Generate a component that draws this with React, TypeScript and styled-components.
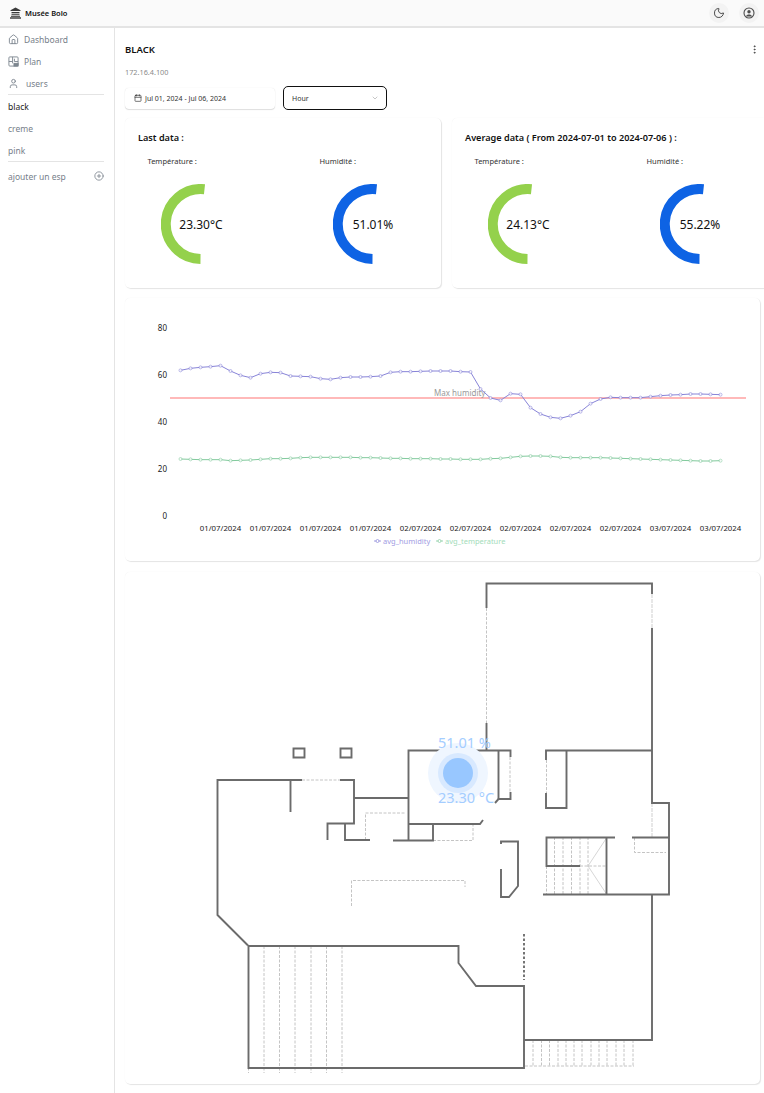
import React from 'react'
import styled, { createGlobalStyle } from 'styled-components'
import { Calendar, ChevronDown, CirclePlus, Home, Moon, MoreVertical, User } from 'lucide-react'

const GlobalStyle = createGlobalStyle`
    html, body {
        margin: 0;
        height: 100%;
        overflow: hidden;
        background: #fff;
        font-family: "Noto Sans", "Open Sans", sans-serif;
        color: #111;
    }
`

const Page = styled.div`
    width: 764px;
    height: 1093px;
    overflow: hidden;
    display: flex;
    flex-direction: column;
`

const Topbar = styled.header`
    height: 26px;
    flex: none;
    display: flex;
    align-items: center;
    padding: 0 5px 0 10px;
    background: #fafafa;
    border-bottom: 2px solid #e4e4e4;
`

const Brand = styled.div`
    display: flex;
    align-items: center;
    gap: 4px;
    font-size: 7.5px;
    font-weight: 600;
`

const TopActions = styled.div`
    margin-left: auto;
    display: flex;
    gap: 10px;
`

const RoundButton = styled.button`
    width: 20px;
    height: 20px;
    padding: 0;
    border: 0;
    border-radius: 50%;
    background: #f3f3f3;
    color: #4d4d4d;
    display: flex;
    align-items: center;
    justify-content: center;
`

const Body = styled.div`
    flex: 1;
    display: flex;
    min-height: 0;
`

const Sidebar = styled.nav`
    width: 114px;
    flex: none;
    border-right: 1px solid #e4e4e4;
`

const NavList = styled.div<{ $divided?: boolean }>`
    margin: 0 10px 0 8px;
    border-bottom: ${p => (p.$divided ? '1px solid #e4e4e4' : '0')};
`

const NavItem = styled.div<{ $active?: boolean; $indent?: number }>`
    height: 22px;
    display: flex;
    align-items: center;
    gap: ${p => p.$indent ?? 5}px;
    font-size: 8.5px;
    color: ${p => (p.$active ? '#222' : '#77808a')};

    svg {
        flex: none;
        color: #7d868f;
    }
`

const AddRow = styled(NavItem)`
    height: 28px;
    justify-content: space-between;
`

const Main = styled.main`
    flex: 1;
    min-width: 0;
    padding: 11px 4px 0 10px;
`

const TitleRow = styled.div`
    height: 20px;
    display: flex;
    align-items: center;
    justify-content: space-between;
    color: #444;
`

const Title = styled.h1`
    margin: 0;
    font-size: 9.5px;
    font-weight: 600;
    color: #111;
`

const Ip = styled.div`
    margin-top: 6px;
    font-size: 7.3px;
    line-height: 14px;
    color: #8a8a8a;
`

const Filters = styled.div`
    margin-top: 7px;
    display: flex;
    align-items: center;
    gap: 8px;
`

const DateField = styled.div`
    width: 150px;
    height: 21px;
    box-sizing: border-box;
    display: flex;
    align-items: center;
    gap: 3px;
    padding-left: 9px;
    font-size: 7px;
    color: #333;
    border-radius: 4px;
    box-shadow: 0 1px 1px rgba(0, 0, 0, 0.12), 0 0 1px rgba(0, 0, 0, 0.14);
`

const SelectField = styled.div`
    width: 104px;
    height: 24px;
    box-sizing: border-box;
    display: flex;
    align-items: center;
    justify-content: space-between;
    padding: 0 7px 0 8px;
    font-size: 7px;
    color: #333;
    background: #fff;
    border: 1px solid #111;
    border-radius: 5px;

    svg {
        color: #aaa;
    }
`

const Card = styled.section`
    background: #fff;
    border-radius: 5px;
    box-shadow: 1px 1px 1px rgba(0, 0, 0, 0.1), 0 0 1px rgba(0, 0, 0, 0.08);
`

const GaugeRow = styled.div`
    margin-top: 8px;
    display: flex;
    gap: 11px;
    width: 643px;
`

const GaugeCard = styled(Card)`
    width: 316px;
    height: 170px;
    flex: none;
    box-sizing: border-box;
    padding: 13px 13px 0;
`

const CardHeading = styled.h2`
    margin: 0;
    font-size: 9.15px;
    line-height: 14px;
    font-weight: 600;
`

const GaugeColumns = styled.div`
    margin-top: 10px;
    padding-left: 9.5px;
    display: grid;
    grid-template-columns: 172px 1fr;
`

const GaugeLabel = styled.div`
    font-size: 7.5px;
    line-height: 12px;
    color: #333;
`

const GaugeWrap = styled.div`
    margin: 17px 0 0 13px;
    width: 80px;
    height: 80px;
`

const GaugeText = styled.text`
    font-size: 12px;
    fill: #111;
    text-anchor: middle;
`

const ChartCard = styled(Card)`
    margin-top: 10px;
    height: 263px;
    width: 635px;

    svg {
        display: block;
    }
`

const AxisText = styled.text<{ $anchor?: string; $size?: number }>`
    font-size: ${p => p.$size ?? 8.5}px;
    fill: #222;
    text-anchor: ${p => p.$anchor ?? 'middle'};
`

const NoteText = styled.text`
    font-size: 8px;
    fill: #999;
`

const LegendText = styled.text<{ $color: string }>`
    font-size: 7.5px;
    fill: ${p => p.$color};
`

const PlanCard = styled(Card)`
    position: relative;
    margin-top: 11px;
    height: 512px;
    width: 635px;

    svg {
        display: block;
    }
`

const Sensor = styled.div`
    position: absolute;
    left: 313px;
    top: 162px;
    width: 60px;
    height: 71px;
`

const SensorValue = styled.div<{ $bottom?: boolean }>`
    position: absolute;
    z-index: 1;
    left: 0;
    ${p => (p.$bottom ? 'bottom: 0;' : 'top: 0;')}
    font-size: 14.5px;
    line-height: 16px;
    white-space: nowrap;
    color: #a4cdff;
`

const Dot = styled.div`
    position: absolute;
    left: 5px;
    top: 24px;
    width: 30px;
    height: 30px;
    border-radius: 50%;
    background: #98c7ff;
    box-shadow: 0 0 0 5px #d8e9ff, 0 0 0 15px #eff6ff;
`

// sampled from the chart, one point every 10px starting at x=180.5
const humidity = [
    226, 220, 217, 215, 212, 228, 241, 248, 236, 232, 233, 243, 244, 245, 251, 253, 248, 246, 246, 245, 243, 232, 230,
    230, 229, 228, 228, 228, 230, 231, 282, 309, 316, 296, 298, 338, 357, 367, 370, 362, 350, 326, 312, 307, 308, 308,
    308, 305, 302, 300, 299, 297, 297, 298, 299,
]
const temperature = [
    492, 493, 494, 494, 494, 497, 496, 495, 493, 491, 491, 490, 488, 487, 487, 487, 487, 487, 488, 488, 489, 490, 490,
    491, 491, 491, 492, 492, 493, 493, 493, 491, 490, 487, 484, 483, 483, 484, 487, 488, 488, 488, 488, 489, 490, 491,
    492, 493, 494, 495, 496, 497, 498, 498, 497,
]
const yLabels = [80, 60, 40, 20, 0]
const dates = [
    '01/07/2024', '01/07/2024', '01/07/2024', '01/07/2024', '02/07/2024', '02/07/2024', '02/07/2024', '02/07/2024',
    '02/07/2024', '03/07/2024', '03/07/2024',
]

const Series = ({ data, color }: { data: number[]; color: string }) => {
    const pts = data.map((v, i) => [180.5 + i * 10, 295 + v / 3])
    return (
        <g>
            <polyline points={pts.map(p => p.join(',')).join(' ')} fill="none" stroke={color} strokeWidth={1} />
            {pts.map((p, i) => (
                <circle key={i} cx={p[0]} cy={p[1]} r={1.5} fill="#fff" stroke={color} strokeWidth={0.7} opacity={0.8} />
            ))}
        </g>
    )
}

const Chart = () => (
    <svg width={635} height={263} viewBox="125 298 635 263">
        {yLabels.map((v, i) => (
            <AxisText key={v} x={167} y={330.5 + i * 47} $anchor="end" $size={8}>{v}</AxisText>
        ))}
        {dates.map((d, i) => (
            <AxisText key={i} x={220.5 + i * 50} y={530.5} $size={7.8}>{d}</AxisText>
        ))}
        <line x1={170} y1={398} x2={746} y2={398} stroke="#ffb9b9" strokeWidth={2} />
        <NoteText x={434} y={396}>Max humidity</NoteText>
        <Series data={humidity} color="#8884d8" />
        <Series data={temperature} color="#82ca9d" />
        <line x1={374} y1={541} x2={381} y2={541} stroke="#8884d8" strokeWidth={0.8} />
        <circle cx={377.5} cy={541} r={1.5} fill="#fff" stroke="#8884d8" strokeWidth={0.7} />
        <LegendText x={383} y={544} $color="#a19cE3">avg_humidity</LegendText>
        <line x1={436} y1={541} x2={443} y2={541} stroke="#82ca9d" strokeWidth={0.8} />
        <circle cx={439.5} cy={541} r={1.5} fill="#fff" stroke="#82ca9d" strokeWidth={0.7} />
        <LegendText x={445} y={544} $color="#a3dcba">avg_temperature</LegendText>
    </svg>
)

const Gauge = ({ value, color }: { value: string; color: string }) => (
    <GaugeWrap>
        <svg width={80} height={80} viewBox="0 0 80 80">
            <path d="M43.5 5.2 A35 35 0 1 0 39.5 75" fill="none" stroke={color} strokeWidth={10} />
            <GaugeText x={40} y={44.5}>{value}</GaugeText>
        </svg>
    </GaugeWrap>
)

const walls = [
    // small pillars
    'M293.5 748.5H304.5V757.5H293.5Z',
    'M340.5 748.5H351.5V757.5H340.5Z',
    // west wing
    'M302 780H217.5V915L248 945.5',
    'M340 780H354V823.5H327.5V840',
    'M290.5 780V812',
    'M345 823.5V840H370',
    'M354 798H408',
    // central room
    'M393 840.5H433V824',
    'M408.5 840V750.5H510.5V757',
    'M408 824H480L483 820',
    'M486.5 750V723',
    'M498.5 750V799H510.5V792',
    'M498.5 799L495 803',
    // north block
    'M486.5 608V583.5H652V594',
    'M652 628V803H669V894.5H543',
    'M652 894V1040H524',
    'M546 760V750.5H652',
    'M546 793V808H566.5V750',
    // stairs
    'M615 837.5H546.5V866H580',
    'M606.5 837.5V894',
    'M632 837.5H669',
    // hook
    'M501 844V841.5H518V886L509 897H501V869',
    // south block
    'M248.5 946V1068H524V986H476L458.5 963V946H248',
]

const dashed = [
    'M302 780H340',
    'M365.5 840V813H405',
    'M433 840.5H473V824',
    'M351.5 906V880.5H465V887',
    'M510 757V792',
    'M486.5 608V723',
    'M546.5 760V793',
    'M546.5 866V894',
    'M580 866H606',
    'M554.5 837V894',
    'M563 837V894',
    'M571.5 837V894',
    'M580 837V894',
    'M588 837V894',
    'M634.5 837.5V852.5H666',
    'M248.5 946V1073',
    'M264 946V1073',
    'M279.5 946V1073',
    'M295 946V1073',
    'M311 946V1073',
    'M326.5 946V1073',
    'M342 946V1073',
    'M524 1040V1066H634',
    ...[533, 541.5, 549.5, 558, 566, 574, 582, 591, 599, 607, 616, 624, 633].map(x => `M${x} 1040V1066`),
]

const FloorPlan = () => (
    <svg width={635} height={512} viewBox="125 572 635 512">
        <g fill="none" stroke="#c4c4c4" strokeWidth={1} strokeDasharray="3 1.5">
            {dashed.map(d => <path key={d} d={d} />)}
        </g>
        <path d="M652 594V628" fill="none" stroke="#d8d8d8" strokeWidth={1.2} strokeDasharray="4 1" />
        <path d="M652 803V837" fill="none" stroke="#d8d8d8" strokeWidth={1.2} strokeDasharray="4 1" />
        <path d="M588 866L606.5 838M588 866L606.5 894" fill="none" stroke="#c4c4c4" strokeWidth={0.7} />
        <path d="M524 934V980" fill="none" stroke="#666" strokeWidth={1.8} strokeDasharray="2.5 2" />
        <g fill="none" stroke="#6b6b6b" strokeWidth={1.9}>
            {walls.map(d => <path key={d} d={d} />)}
        </g>
    </svg>
)

const PlanIcon = () => (
    <svg width={11} height={11} viewBox="0 0 12 12" fill="none" stroke="currentColor" strokeWidth={1}>
        <rect x={1} y={1} width={10} height={10} rx={1} />
        <path d="M1 6H5M5 1V8M7 6H11M7 6V3" />
        <rect x={6.5} y={8} width={4.5} height={3} fill="currentColor" />
    </svg>
)

const MuseumIcon = () => (
    <svg width={11} height={12} viewBox="0 0 11 12" fill="#3a3a3a">
        <path d="M5.5 0.5L10.5 3.2V4H0.5V3.2Z" />
        <rect x={1.5} y={5} width={8} height={1} />
        <rect x={1.5} y={6.6} width={8} height={1.6} fill="#666" />
        <rect x={1} y={8.8} width={9} height={1} />
        <rect x={0} y={10.3} width={11} height={1.4} />
    </svg>
)

// circle with a filled head, the lucide one is only outlines
const AccountIcon = () => (
    <svg width={12} height={12} viewBox="0 0 12 12" fill="none" stroke="currentColor" strokeWidth={1.1}>
        <circle cx={6} cy={6} r={5} />
        <circle cx={6} cy={4.8} r={1.7} fill="currentColor" stroke="none" />
        <path d="M3 9.6C3.4 8 4.6 7.5 6 7.5S8.6 8 9 9.6" fill="currentColor" stroke="none" />
    </svg>
)

const App = () => (
    <Page>
        <GlobalStyle />
        <Topbar>
            <Brand>
                <MuseumIcon />
                Musée Bolo
            </Brand>
            <TopActions>
                <RoundButton><Moon size={12} /></RoundButton>
                <RoundButton><AccountIcon /></RoundButton>
            </TopActions>
        </Topbar>
        <Body>
            <Sidebar>
                <NavList $divided>
                    <NavItem><Home size={11} />Dashboard</NavItem>
                    <NavItem><PlanIcon />Plan</NavItem>
                    <NavItem $indent={7}><User size={11} />users</NavItem>
                </NavList>
                <NavList $divided>
                    <NavItem $active>black</NavItem>
                    <NavItem>creme</NavItem>
                    <NavItem>pink</NavItem>
                </NavList>
                <NavList>
                    <AddRow>ajouter un esp<CirclePlus size={10} /></AddRow>
                </NavList>
            </Sidebar>
            <Main>
                <TitleRow>
                    <Title>BLACK</Title>
                    <MoreVertical size={11} />
                </TitleRow>
                <Ip>172.16.4.100</Ip>
                <Filters>
                    <DateField><Calendar size={8} />Jul 01, 2024 - Jul 06, 2024</DateField>
                    <SelectField>Hour<ChevronDown size={8} /></SelectField>
                </Filters>
                <GaugeRow>
                    <GaugeCard>
                        <CardHeading>Last data :</CardHeading>
                        <GaugeColumns>
                            <div>
                                <GaugeLabel>Température :</GaugeLabel>
                                <Gauge value="23.30°C" color="#94d14c" />
                            </div>
                            <div>
                                <GaugeLabel>Humidité :</GaugeLabel>
                                <Gauge value="51.01%" color="#0e63e4" />
                            </div>
                        </GaugeColumns>
                    </GaugeCard>
                    <GaugeCard>
                        <CardHeading>Average data ( From 2024-07-01 to 2024-07-06 ) :</CardHeading>
                        <GaugeColumns>
                            <div>
                                <GaugeLabel>Température :</GaugeLabel>
                                <Gauge value="24.13°C" color="#94d14c" />
                            </div>
                            <div>
                                <GaugeLabel>Humidité :</GaugeLabel>
                                <Gauge value="55.22%" color="#0e63e4" />
                            </div>
                        </GaugeColumns>
                    </GaugeCard>
                </GaugeRow>
                <ChartCard>
                    <Chart />
                </ChartCard>
                <PlanCard>
                    <FloorPlan />
                    <Sensor>
                        <SensorValue>51.01 %</SensorValue>
                        <Dot />
                        <SensorValue $bottom>23.30 °C</SensorValue>
                    </Sensor>
                </PlanCard>
            </Main>
        </Body>
    </Page>
)

export default App
